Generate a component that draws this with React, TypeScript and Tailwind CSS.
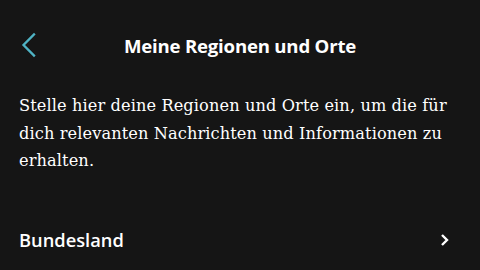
const App = () => {
  return (
    <div className="w-[480px] h-[270px] overflow-hidden bg-[#151515] text-white">
      <header className="relative h-[92px] flex items-start justify-center pt-[34px]">
        <button className="absolute left-[18px] top-[32px] w-[20px] h-[26px] flex items-center justify-center">
          <svg width="18" height="26" viewBox="0 0 18 26" fill="none">
            <path d="M15 2.5 L4.5 13 L15 23.5" stroke="#4fb3c4" strokeWidth="2.3" strokeLinecap="square" />
          </svg>
        </button>
        <h1 className="font-['Open_Sans',sans-serif] font-bold text-[18.6px] leading-[24px] tracking-[-0.2px]">
          Meine Regionen und Orte
        </h1>
      </header>
      <p className="pl-[19px] pr-[20px] font-['DejaVu_Serif',serif] text-[16.2px] tracking-[0.1px] leading-[27.5px] text-white">
        Stelle hier deine Regionen und Orte ein, um die für dich relevanten Nachrichten und
        Informationen zu erhalten.
      </p>
      <div className="mt-[53px] flex items-center justify-between pl-[19px] pr-[30px]">
        <span className="font-['Open_Sans',sans-serif] font-semibold text-[18.3px] leading-[24px]">
          Bundesland
        </span>
        <svg width="10" height="14" viewBox="0 0 10 14" fill="none">
          <path d="M2 2 L7 7 L2 12" stroke="#ffffff" strokeWidth="2.4" />
        </svg>
      </div>
    </div>
  );
};

export default App;
